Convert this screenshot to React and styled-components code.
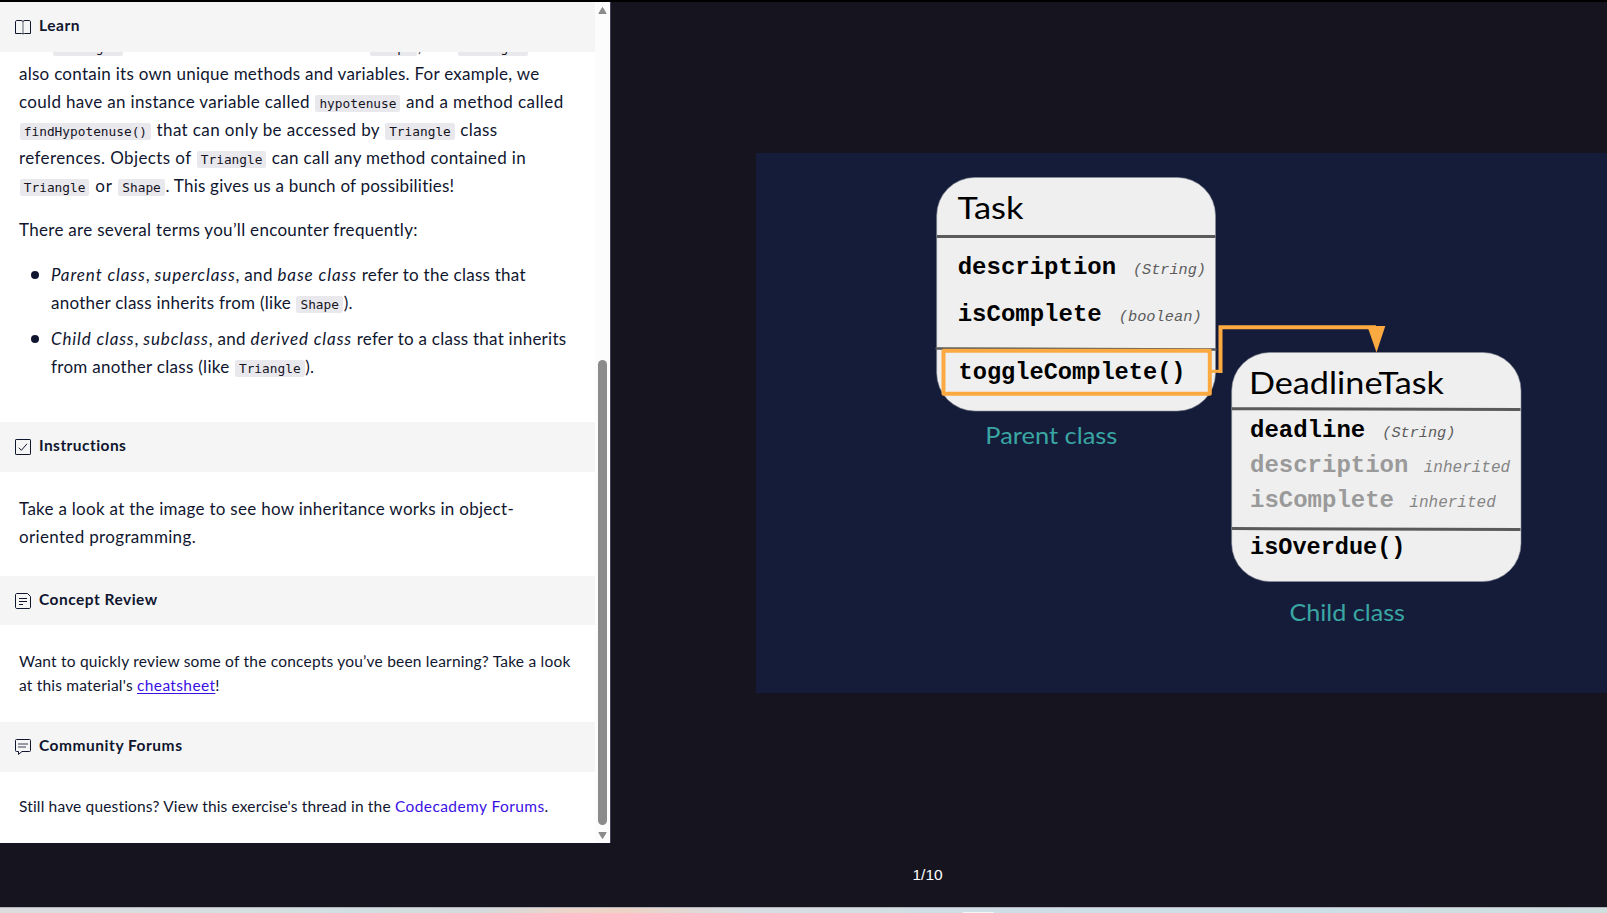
import React from "react";
import styled, { createGlobalStyle } from "styled-components";

const GlobalStyle = createGlobalStyle`
  * { box-sizing: border-box; }
  body { margin: 0; background: #16141f; color: #10162f; overflow: hidden; }
`;

const sans = `Lato, "Liberation Sans", sans-serif`;

const Page = styled.div`
  display: flex;
  flex-direction: column;
  width: 100%;
  height: 100vh;
  border-top: 2px solid #000;
  font-family: ${sans};
`;

const Workspace = styled.main`
  display: flex;
  height: 841px;
`;

const Panel = styled.aside`
  display: flex;
  flex: none;
  width: 611px;
  height: 841px;
  background: #fff;
  border-right: 1px solid #3f4257;
`;

const Lesson = styled.div`
  display: flex;
  flex-direction: column;
  width: 595px;
`;

const SectionHeader = styled.h2`
  display: flex;
  align-items: center;
  flex: none;
  gap: 8px;
  height: ${(p) => p.$height || 50}px;
  margin: 0;
  padding: 0 15px;
  background: #f5f5f5;
  font-size: 15.5px;
  font-weight: 700;
  line-height: 24px;

  svg { display: block; flex: none; }
`;

const HeaderText = styled.span`
  letter-spacing: ${(p) => p.$spacing}px;
  padding-bottom: ${(p) => p.$lift || 5}px;
`;

const Body = styled.div`
  flex: none;
  height: ${(p) => p.$height}px;
  padding: ${(p) => p.$top || 0}px 19px 0;
  overflow: hidden;
  font-size: ${(p) => (p.$small ? 15.5 : 17)}px;
  line-height: ${(p) => (p.$small ? 24 : 28)}px;
`;

const Paragraph = styled.p`
  margin: ${(p) => p.$offset || 0}px 0 0;
`;

const Line = styled.span`
  display: block;
  height: ${(p) => (p.$small ? 24 : 28)}px;
  white-space: pre;
`;

const Run = styled.span`
  letter-spacing: ${(p) => p.$s}px;
`;

const Term = styled.em`
  letter-spacing: ${(p) => p.$s}px;
`;

const Code = styled.code`
  display: inline-block;
  height: 17px;
  margin: 0 0.7px 0 0.8px;
  padding: 0 4px;
  border-radius: 2px;
  background: #e9e8ed;
  color: #15141f;
  font-family: "DejaVu Sans Mono", monospace;
  font-size: 12.8px;
  line-height: 17px;
  letter-spacing: 0;
`;

const List = styled.ul`
  display: flex;
  flex-direction: column;
  gap: 8px;
  margin: 17px 0 0;
  padding: 0;
  list-style: none;
`;

const Item = styled.li`
  display: flex;
  gap: 12px;
  padding-left: 12px;

  &::before {
    content: "";
    flex: none;
    width: 8px;
    height: 8px;
    margin-top: 10px;
    border-radius: 50%;
    background: #10162f;
  }
`;

const Link = styled.a`
  color: #3a10e5;
  letter-spacing: ${(p) => p.$s}px;
  text-decoration: ${(p) => (p.$underline ? "underline" : "none")};
  text-underline-offset: 2px;
`;

const Scrollbar = styled.div`
  display: flex;
  flex-direction: column;
  align-items: center;
  width: 15px;
  padding: 5px 0 4px;
  background: #fcfcfc;
`;

const Thumb = styled.div`
  width: 9px;
  height: 465px;
  margin: auto 0 7px;
  border-radius: 5px;
  background: #8b8b8b;
`;

const Stage = styled.section`
  flex: 1;
  padding: 151px 0 0 145px;
  overflow: hidden;

  svg { display: block; }
`;

const Footer = styled.footer`
  display: flex;
  align-items: center;
  height: 64px;
  padding-left: 912.5px;
  color: #fff;
  font-family: "Liberation Sans", sans-serif;
  font-size: 15.5px;
`;

const Counter = styled.span`
  padding-bottom: 1px;
`;

const Taskbar = styled.div`
  height: 6px;
  border-top: 1px solid #b3b3ba;
  background: linear-gradient(90deg, #dcdcdf 0, #d2dfe2 350px, #d4dadd 480px, #edd5c9 570px, #ecd3c6 630px, #d8dde2 740px, #cfdee6 1000px, #cddfe7 1300px, #cfdedf 1607px);
`;

const TaskbarTab = styled.div`
  width: 31px;
  height: 1px;
  margin: 4px 0 0 963px;
  background: #f3f5f6;
`;

const Icon = ({ children }) => (
  <svg width="16" height="16" viewBox="0 0 16 16" fill="none" stroke="#10162f" strokeWidth="1">
    {children}
  </svg>
);

const BookIcon = () => (
  <Icon>
    <path d="M8 2.5C7.5 1.8 6.7 1.5 6 1.5H2C1 1.5.5 2 .5 3V14.5H6.5C7.2 14.5 7.7 14.7 8 15.2C8.3 14.7 8.8 14.5 9.5 14.5H15.5V3C15.5 2 15 1.5 14 1.5H10C9.3 1.5 8.5 1.8 8 2.5Z" />
    <path d="M8 2.5V15" strokeOpacity=".65" />
  </Icon>
);

const CheckIcon = () => (
  <Icon>
    <rect x=".5" y=".5" width="15" height="15" rx=".6" />
    <path d="M3.8 8.7L6.4 11.3L12 4.8" />
  </Icon>
);

const NoteIcon = () => (
  <Icon>
    <path d="M2 .5H12.5L15.5 3.5V14C15.5 15 15 15.5 14 15.5H2C1 15.5.5 15 .5 14V2C.5 1 1 .5 2 .5Z" />
    <path d="M4 5.5H12M4 8.5H12M4 11.5H8" />
  </Icon>
);

const ForumIcon = () => (
  <Icon>
    <path d="M1.5.5H14.5C15.2.5 15.5.8 15.5 1.5V11.5C15.5 12.2 15.2 12.5 14.5 12.5H7L3.5 15.4V12.5H1.5C.8 12.5.5 12.2.5 11.5V1.5C.5.8.8.5 1.5.5Z" />
    <path d="M3 5H13M3 8H11" strokeWidth="1.6" strokeOpacity=".55" />
  </Icon>
);

const Arrow = ({ down }) => (
  <svg width="9" height="7" viewBox="0 0 9 7">
    <path
      d={down ? "M.8.5H8.2L4.5 6.5Z" : "M.8 6.5H8.2L4.5.5Z"}
      fill="#8b8b8b"
      stroke="#8b8b8b"
      strokeLinejoin="round"
    />
  </svg>
);

const Mono = styled.text`
  font-family: "Liberation Mono", monospace;
  font-size: 24px;
  font-weight: 700;
  fill: ${(p) => (p.$muted ? "#9a9a9a" : "#000")};
`;

const Note = styled.text`
  font-family: "Liberation Mono", monospace;
  font-size: ${(p) => (p.$muted ? 16 : 15)}px;
  font-style: italic;
  fill: ${(p) => (p.$muted ? "#858585" : "#5c5c5c")};
`;

const Title = styled.text`
  font-family: ${sans};
  font-size: 31px;
  fill: #000;
`;

const Caption = styled.text`
  font-family: ${sans};
  font-size: 23px;
  fill: #3aa6a3;
`;

const fit = (width) => ({ textLength: width, lengthAdjust: "spacingAndGlyphs" });

const ClassDiagram = () => (
  <svg width="851" height="540" viewBox="0 0 851 540">
    <rect width="851" height="540" fill="#141c3a" />
    <g fill="#efefef" stroke="#8c8f98" strokeWidth=".6">
      <rect x="180.7" y="24.5" width="278.8" height="233.5" rx="38" />
      <rect x="475.7" y="199.5" width="289.3" height="229" rx="38" />
    </g>
    <g stroke="#5a5a5a" strokeWidth="3">
      <path d="M181 83.4H459.5" />
      <path d="M179.5 195.5L460.5 196.5" strokeWidth="2.4" />
      <path d="M476 255.7L764.5 256.5" />
      <path d="M476 375.6L764.5 376.5" />
    </g>
    <g fill="none" stroke="#fba941">
      <rect x="187.5" y="197.7" width="266.3" height="43" strokeWidth="4" strokeLinejoin="round" />
      <path d="M455 218.3H464.5" strokeWidth="3" />
      <path d="M464.5 220V174.3H620" strokeWidth="4" />
    </g>
    <path d="M611.3 173H629.3L620.5 199.5Z" fill="#fba941" />

    <Title x="201.5" y="66" {...fit(66)}>Task</Title>
    <Mono x="201.7" y="120.8" {...fit(158.4)}>description</Mono>
    <Note x="377" y="121" {...fit(73)}>(String)</Note>
    <Mono x="201.7" y="167.8" {...fit(144)}>isComplete</Mono>
    <Note x="362.7" y="168" {...fit(83)}>(boolean)</Note>
    <Mono x="202.5" y="226" {...fit(227)}>toggleComplete()</Mono>
    <Caption x="229.3" y="290.7" {...fit(132)}>Parent class</Caption>

    <Title x="493" y="240.7" {...fit(195)}>DeadlineTask</Title>
    <Mono x="494" y="283.8" {...fit(115.2)}>deadline</Mono>
    <Note x="626.3" y="284" {...fit(73)}>(String)</Note>
    <Mono $muted x="494" y="318.8" {...fit(158.4)}>description</Mono>
    <Note $muted x="667.7" y="319" {...fit(86.5)}>inherited</Note>
    <Mono $muted x="494" y="354" {...fit(144)}>isComplete</Mono>
    <Note $muted x="653.3" y="354" {...fit(86.5)}>inherited</Note>
    <Mono x="494" y="400.9" {...fit(155.5)}>isOverdue()</Mono>
    <Caption x="533.5" y="467.7" {...fit(115.5)}>Child class</Caption>
  </svg>
);

export default function App() {
  return (
    <Page>
      <GlobalStyle />
      <Workspace>
        <Panel>
          <Lesson>
            <SectionHeader>
              <BookIcon />
              <HeaderText $spacing={0.55}>Learn</HeaderText>
            </SectionHeader>
            <Body $height={370}>
              <Paragraph $offset={-20}>
                <Line>
                  <Run $s={0.2}>The </Run>
                  <Code>Triangle</Code>
                  <Run $s={1.12}> class has all the methods of </Run>
                  <Code>Shape</Code>
                  <Run $s={0.34}>, but </Run>
                  <Code>Triangle</Code>
                  <Run $s={0.4}> can</Run>
                </Line>
                <Line>
                  <Run $s={0.265}>also contain its own unique methods and variables. For example, we</Run>
                </Line>
                <Line>
                  <Run $s={0.329}>could have an instance variable called </Run>
                  <Code>hypotenuse</Code>
                  <Run $s={0.423}> and a method called</Run>
                </Line>
                <Line>
                  <Code>findHypotenuse()</Code>
                  <Run $s={0.395}> that can only be accessed by </Run>
                  <Code>Triangle</Code>
                  <Run $s={0.391}> class</Run>
                </Line>
                <Line>
                  <Run $s={0.402}>references. Objects of </Run>
                  <Code>Triangle</Code>
                  <Run $s={0.34}> can call any method contained in</Run>
                </Line>
                <Line>
                  <Code>Triangle</Code>
                  <Run $s={0.8}> or </Run>
                  <Code>Shape</Code>
                  <Run $s={0.22}>. This gives us a bunch of possibilities!</Run>
                </Line>
              </Paragraph>
              <Paragraph $offset={16}>
                <Line>
                  <Run $s={0.3}>There are several terms you’ll encounter frequently:</Run>
                </Line>
              </Paragraph>
              <List>
                <Item>
                  <div>
                    <Line>
                      <Term $s={0.9}>Parent class</Term>
                      <Run $s={0.3}>, </Run>
                      <Term $s={0.87}>superclass</Term>
                      <Run $s={0.3}>, and </Run>
                      <Term $s={0.92}>base class</Term>
                      <Run $s={0.26}> refer to the class that</Run>
                    </Line>
                    <Line>
                      <Run $s={0.26}>another class inherits from (like </Run>
                      <Code>Shape</Code>
                      <Run $s={0.2}>).</Run>
                    </Line>
                  </div>
                </Item>
                <Item>
                  <div>
                    <Line>
                      <Term $s={0.85}>Child class</Term>
                      <Run $s={0.3}>, </Run>
                      <Term $s={0.85}>subclass</Term>
                      <Run $s={0.3}>, and </Run>
                      <Term $s={0.9}>derived class</Term>
                      <Run $s={0.25}> refer to a class that inherits</Run>
                    </Line>
                    <Line>
                      <Run $s={0.298}>from another class (like </Run>
                      <Code>Triangle</Code>
                      <Run $s={0.2}>).</Run>
                    </Line>
                  </div>
                </Item>
              </List>
            </Body>

            <SectionHeader>
              <CheckIcon />
              <HeaderText $spacing={0.45}>Instructions</HeaderText>
            </SectionHeader>
            <Body $height={104} $top={23}>
              <Paragraph>
                <Line>
                  <Run $s={0.285}>Take a look at the image to see how inheritance works in object-</Run>
                </Line>
                <Line>
                  <Run $s={0.34}>oriented programming.</Run>
                </Line>
              </Paragraph>
            </Body>

            <SectionHeader $height={49}>
              <NoteIcon />
              <HeaderText $spacing={0.49} $lift={3}>Concept Review</HeaderText>
            </SectionHeader>
            <Body $small $height={97} $top={24}>
              <Paragraph>
                <Line $small>
                  <Run $s={0.213}>Want to quickly review some of the concepts you’ve been learning? Take a look</Run>
                </Line>
                <Line $small>
                  <Run $s={0.2}>at this material's </Run>
                  <Link $underline $s={0.37}>cheatsheet</Link>
                  <Run $s={0}>!</Run>
                </Line>
              </Paragraph>
            </Body>

            <SectionHeader>
              <ForumIcon />
              <HeaderText $spacing={0.53}>Community Forums</HeaderText>
            </SectionHeader>
            <Body $small $height={71} $top={22}>
              <Paragraph>
                <Line $small>
                  <Run $s={0.165}>Still have questions? View this exercise's thread in the </Run>
                  <Link $s={0.42}>Codecademy Forums</Link>
                  <Run $s={0}>.</Run>
                </Line>
              </Paragraph>
            </Body>
          </Lesson>
          <Scrollbar>
            <Arrow />
            <Thumb />
            <Arrow down />
          </Scrollbar>
        </Panel>
        <Stage>
          <ClassDiagram />
        </Stage>
      </Workspace>
      <Footer>
        <Counter>1/10</Counter>
      </Footer>
      <Taskbar>
        <TaskbarTab />
      </Taskbar>
    </Page>
  );
}
